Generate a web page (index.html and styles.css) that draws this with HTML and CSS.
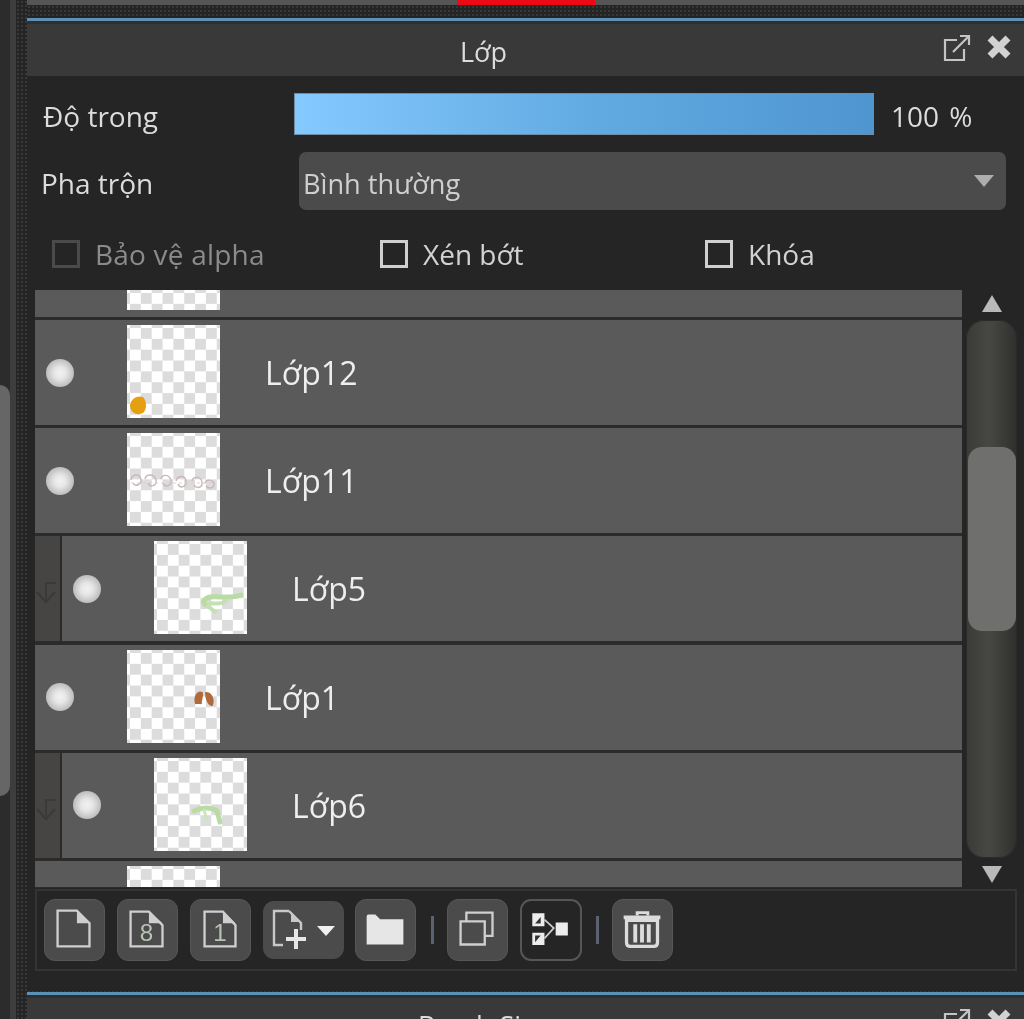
FILE: index.html
```html
<!DOCTYPE html>
<html lang="vi">
<head>
<meta charset="utf-8">
<title>Lớp</title>
<link rel="stylesheet" href="styles.css">
</head>
<body>
<div class="app">
  <aside class="rail">
    <div class="rail-track"><div class="rail-thumb"></div></div>
    <div class="rail-gap"></div>
    <div class="rail-dots"></div>
  </aside>
  <main class="main">
    <div class="top-strip"><div class="top-red"></div></div>
    <div class="dots"></div>
    <div class="blue-line"></div>

    <section class="panel">
      <header class="title-bar">
        <div class="title">Lớp</div>
        <svg class="head-icon pop" viewBox="0 0 30 30"><path d="M16 8H4V28H23V17" fill="none" stroke="#c4c4c4" stroke-width="2.200"/><path d="M12 20L27 5M19 4H28V13" fill="none" stroke="#c4c4c4" stroke-width="2.200"/></svg>
        <svg class="head-icon close" viewBox="0 0 26 26"><path d="M4 4L22 22M22 4L4 22" stroke="#d2d2d2" stroke-width="7"/></svg>
      </header>

      <div class="body">
        <div class="opacity-row">
          <span class="label">Độ trong</span>
          <div class="slider"></div>
          <span class="label value">100 %</span>
        </div>
        <div class="blend-row">
          <span class="label">Pha trộn</span>
          <div class="select"><span class="select-text">Bình thường</span><i class="select-arrow"></i></div>
        </div>
        <div class="check-row">
          <label class="check alpha disabled"><i class="box"></i>Bảo vệ alpha</label>
          <label class="check clip"><i class="box"></i>Xén bớt</label>
          <label class="check lock"><i class="box"></i>Khóa</label>
        </div>

        <div class="list-wrap">
          <div class="list">
            <div class="row cut-top"><div class="eye-slot"></div><div class="thumb stub"></div></div>

            <div class="row">
              <div class="eye-slot"><i class="eye"></i></div>
              <div class="thumb"><svg viewBox="0 0 93 93"><path d="M3 80C4 73 11 70 16 72C20 76 20 85 16 88C10 91 3 88 3 80Z" fill="#e5a012"/></svg></div>
              <span class="layer-name">Lớp12</span>
            </div>

            <div class="row">
              <div class="eye-slot"><i class="eye"></i></div>
              <div class="thumb"><svg viewBox="0 0 93 93"><path d="M4 47C5 41 12 40 14 46C15 52 8 54 6 50M18 46C19 41 27 40 29 47C30 53 23 55 21 50M34 46C35 41 42 41 44 47C45 53 38 55 36 50M49 48C50 43 58 41 59 48C60 54 53 56 51 51M65 48C66 43 74 43 75 49C76 55 69 56 67 52M78 50C79 46 86 46 87 51C87 56 81 56 79 53" fill="none" stroke="#cbb6b6" stroke-width="1.400"/><path d="M4 50H88" fill="none" stroke="#e6cccc" stroke-width="1" stroke-dasharray="3 3"/></svg></div>
              <span class="layer-name">Lớp11</span>
            </div>

            <div class="row child">
              <div class="clip-mark"><svg viewBox="0 0 27 30"><path d="M23 6H13V22" fill="none" stroke="#3a3a3a" stroke-width="2"/><path d="M4 15L13 25L22 15" fill="none" stroke="#3a3a3a" stroke-width="2.400"/></svg></div>
              <div class="eye-slot"><i class="eye"></i></div>
              <div class="thumb"><svg viewBox="0 0 93 93"><path d="M87 54C77 58 66 55 56 56C49 58 48 62 52 64" fill="none" stroke="#b9dba4" stroke-width="5" stroke-linecap="round"/><path d="M56 62C62 63 68 63 72 60M54 65L61 71" fill="none" stroke="#c5e0b4" stroke-width="4" stroke-linecap="round"/></svg></div>
              <span class="layer-name">Lớp5</span>
            </div>

            <div class="row">
              <div class="eye-slot"><i class="eye"></i></div>
              <div class="thumb"><svg viewBox="0 0 93 93"><path d="M69 54C67 46 71 41 75 43C76 47 73 50 74 54M79 43C84 43 87 49 85 55C81 54 79 48 79 43Z" fill="#b16a3c" stroke="#b16a3c" stroke-width="2" stroke-linejoin="round"/></svg></div>
              <span class="layer-name">Lớp1</span>
            </div>

            <div class="row child">
              <div class="clip-mark"><svg viewBox="0 0 27 30"><path d="M23 6H13V22" fill="none" stroke="#3a3a3a" stroke-width="2"/><path d="M4 15L13 25L22 15" fill="none" stroke="#3a3a3a" stroke-width="2.400"/></svg></div>
              <div class="eye-slot"><i class="eye"></i></div>
              <div class="thumb"><svg viewBox="0 0 93 93"><path d="M40 53C48 49 58 49 63 53L66 64" fill="none" stroke="#b9dba4" stroke-width="5" stroke-linecap="round"/><path d="M50 52L53 62" stroke="#cde4bd" stroke-width="3" stroke-linecap="round"/></svg></div>
              <span class="layer-name">Lớp6</span>
            </div>

            <div class="row cut-bottom"><div class="eye-slot"></div><div class="thumb stub"></div></div>
          </div>

          <div class="vscroll">
            <i class="arrow up"></i>
            <div class="vtrack"><div class="vthumb"></div></div>
            <i class="arrow down"></i>
          </div>
        </div>

        <div class="toolbar">
          <button class="tool"><svg viewBox="0 0 61 62"><path d="M13 11H33L46 24V48H13Z" fill="none" stroke="#cfcfcf" stroke-width="2.400"/><path d="M33 11V24H46Z" fill="#cfcfcf"/></svg></button>
          <button class="tool"><svg viewBox="0 0 61 62"><path d="M13 12H32L46 26V48H13Z" fill="none" stroke="#cfcfcf" stroke-width="2.400"/><path d="M32 12V24H46Z" fill="#cfcfcf"/><text x="29.500" y="42" class="num">8</text></svg></button>
          <button class="tool"><svg viewBox="0 0 61 62"><path d="M14 12H33L46 26V48H14Z" fill="none" stroke="#cfcfcf" stroke-width="2.400"/><path d="M33 12V24H46Z" fill="#cfcfcf"/><text x="30" y="42" class="num">1</text></svg></button>
          <button class="tool wide"><svg viewBox="0 0 81 58"><path d="M26 10H11V44H20M26 10L38 22V29" fill="none" stroke="#c8c8c8" stroke-width="2.400"/><path d="M28 11V21H37Z" fill="#c8c8c8"/><path d="M33 28V48M23 38H43" stroke="#e6e6e6" stroke-width="4"/><path d="M54 25H72L63 35Z" fill="#f0f0f0"/></svg></button>
          <button class="tool"><svg viewBox="0 0 61 62"><path d="M11 17Q11 15 13 15H20L25 20H49V46H11Z" fill="#e6e6e6"/></svg></button>
          <i class="sep"></i>
          <button class="tool"><svg viewBox="0 0 61 62"><path d="M13 22H38V46H13Z" fill="none" stroke="#cfcfcf" stroke-width="2.400"/><path d="M19 22V13H46V37H38" fill="none" stroke="#cfcfcf" stroke-width="2.400"/></svg></button>
          <button class="tool merge"><svg viewBox="0 0 62 62"><path d="M11 13H24V27H11ZM11 34H24V47H11ZM36 23H49V37H36Z" fill="#ececec"/><path d="M14 24L20 17V24ZM14 37L20 37L14 44Z" fill="#333"/><path d="M24 20L34 29L24 40" fill="none" stroke="#cfcfcf" stroke-width="1.800"/></svg></button>
          <i class="sep second"></i>
          <button class="tool"><svg viewBox="0 0 61 62"><path d="M11 18H49" stroke="#dcdcdc" stroke-width="4"/><path d="M25 16V13H36V16" fill="none" stroke="#dcdcdc" stroke-width="3"/><path d="M14 21H46V44Q46 48 42 48H18Q14 48 14 44Z" fill="none" stroke="#dcdcdc" stroke-width="3.400"/><path d="M23 25V44M30 25V44M37 25V44" stroke="#dcdcdc" stroke-width="4"/></svg></button>
        </div>
      </div>

      <div class="dots lower"></div>
      <div class="blue-line"></div>
      <header class="title-bar next">
        <div class="title">Brush Size</div>
        <svg class="head-icon pop" viewBox="0 0 30 30"><path d="M16 8H4V28H23V17" fill="none" stroke="#c4c4c4" stroke-width="2.200"/><path d="M12 20L27 5M19 4H28V13" fill="none" stroke="#c4c4c4" stroke-width="2.200"/></svg>
        <svg class="head-icon close" viewBox="0 0 26 26"><path d="M4 4L22 22M22 4L4 22" stroke="#d2d2d2" stroke-width="7"/></svg>
      </header>
    </section>
  </main>
</div>
</body>
</html>
```

FILE: styles.css
```css
* { box-sizing: border-box; }
html, body { margin: 0; height: 100%; background: #252525; overflow: hidden; }
body { font-family: "Open Sans", "Noto Sans", sans-serif; color: #dcdcdc; }

.app { display: flex; width: 1024px; height: 1019px; overflow: hidden; filter: blur(0.7px); }

/* left rail */
.rail { display: flex; flex: 0 0 27px; background: #2a2a2a; }
.rail-track { flex: 0 0 10px; background: #2c2c2c; padding-top: 385px; }
.rail-thumb { height: 411px; background: #666; border-radius: 0 12px 12px 0; }
.rail-gap { flex: 0 0 6px; background: #3d3d3d; }
.rail-dots { flex: 1; background: #242424 radial-gradient(circle, #383838 1px, transparent 1.3px) 0 0 / 4px 4px; }

.main { flex: 1; display: flex; flex-direction: column; min-width: 0; }
.top-strip { flex: 0 0 5px; background: #555; padding-left: 430px; }
.top-red { width: 138px; height: 5px; background: #ee0a14; }
.dots { flex: 0 0 13px; background: #242424 radial-gradient(circle, #383838 1px, transparent 1.3px) 0 0 / 4px 4px; }
.dots.lower { flex-basis: 2px; }
.blue-line { flex: 0 0 3px; background: #5b90b8; }

.panel { flex: 1; display: flex; flex-direction: column; min-height: 0; }

.title-bar { flex: 0 0 55px; height: 55px; display: flex; align-items: flex-start; background: #3a3939; box-shadow: inset 0 3px 0 #302f2f; }
.title { flex: 0 0 913px; height: 55px; text-align: center; font-size: 27px; line-height: 62px; }
.head-icon { display: block; margin-top: 11px; }
.pop { width: 30px; height: 30px; margin-left: 1px; }
.close { width: 26px; height: 26px; margin-left: 15px; margin-top: 13px; }

.body { flex: 0 0 914px; display: flex; flex-direction: column; background: #252525; padding-left: 8px; }

.label { font-size: 28px; line-height: 38px; padding-top: 4px; color: #dcdcdc; }

.opacity-row { display: flex; align-items: center; height: 42px; margin-top: 17px; padding-left: 8px; }
.opacity-row .label { flex: 0 0 251px; }
.slider { flex: 0 0 580px; height: 42px; background: linear-gradient(90deg, #85caff, #5fa8e0 55%, #4f96d0); box-shadow: inset 0 0 0 1px #6f8da5; }
.opacity-row .value { flex: 0 0 auto; margin-left: 17px; word-spacing: 3px; }

.blend-row { display: flex; align-items: center; height: 58px; margin-top: 17px; padding-left: 6px; }
.blend-row .label { flex: 0 0 258px; }
.select { flex: 0 0 707px; height: 58px; display: flex; align-items: center; justify-content: space-between; padding: 0 12px 0 4px; background: #4b4b4b; border-radius: 7px; font-size: 27.200px; color: #cfcfcf; }
.select-text { padding-top: 5px; }
.select-arrow { width: 0; height: 0; border-left: 10px solid transparent; border-right: 10px solid transparent; border-top: 12px solid #adadad; }

.check-row { display: flex; align-items: center; height: 28px; margin-top: 30px; }
.check { display: flex; align-items: center; font-size: 28px; color: #d2d2d2; }
.alpha { flex: 0 0 345px; padding-left: 17px; }
.clip { flex: 0 0 325px; }
.box { flex: 0 0 28px; height: 28px; margin-right: 15px; border: 3px solid #cfcfcf; }
.check.disabled { color: #8b8b8b; letter-spacing: 0.2px; }
.check.disabled .box { border-color: #4b4b4b; margin-right: 15px; }

.list-wrap { display: flex; height: 598px; margin-top: 22px; }
.list { flex: 0 0 927px; height: 598px; overflow: hidden; display: flex; flex-direction: column; background: #2b2b2b; }

.row { flex: 0 0 105px; margin-bottom: 3.200px; display: flex; align-items: center; background: #5a5a5a; }
.row.cut-top { flex-basis: 27px; align-items: flex-start; margin-bottom: 3px; }
.row.cut-bottom { flex: 0 0 26px; margin: 0; align-items: flex-end; }
.row.child { margin-left: -2px; }

.clip-mark { flex: 0 0 27px; align-self: stretch; margin-right: 2px; background: #474543; box-shadow: 2px 0 0 #2b2b2b; display: flex; align-items: center; }
.clip-mark svg { display: block; width: 27px; height: 30px; margin-top: 7px; }

.eye-slot { flex: 0 0 92px; padding-left: 11px; }
.eye { display: block; width: 28px; height: 28px; border-radius: 50%; background: radial-gradient(circle, #f2f2f2 0, #e6e6e6 30%, #bdbdbd 70%, #b4b4b4 100%); }

.thumb { flex: 0 0 93px; height: 93px; margin-bottom: 2px; background: #fff conic-gradient(#dcdcdc 25%, #fff 0 50%, #dcdcdc 0 75%, #fff 0) 3px 3px / 21.700px 21.700px; }
.thumb svg { display: block; width: 93px; height: 93px; }
.thumb.stub { height: 20px; margin-bottom: 0; }
.cut-bottom .thumb.stub { height: 21px; }
.layer-name { margin-left: 45px; font-size: 32px; color: #eee; }

.vscroll { display: flex; flex-direction: column; align-items: center; padding-left: 4px; flex: 0 0 55px; }
.arrow { flex: 0 0 auto; width: 0; height: 0; border-left: 10px solid transparent; border-right: 10px solid transparent; }
.arrow.up { margin-top: 5px; border-bottom: 17px solid #b9b9b9; }
.arrow.down { margin-top: 8px; border-top: 17px solid #b9b9b9; }
.vtrack { flex: 0 0 538px; width: 51px; margin-top: 8px; padding: 127px 1px 0 2px; border-radius: 18px; background: linear-gradient(90deg, #3a3a37, #474744 45%, #2f2f2d); box-shadow: inset 0 0 0 1px #2a2a2a; }
.vthumb { height: 184px; border-radius: 14px; background: #6f6f6d; }

.toolbar { display: flex; align-items: center; width: 982px; height: 82px; margin-top: 1px; padding-left: 7px; gap: 12px; border: 2px solid #343434; background: #252525; }
.tool { flex: 0 0 61px; height: 62px; padding: 0; background: #4b4b4b; border: 1px solid #575757; border-radius: 11px; }
.tool svg { display: block; width: 59px; height: 60px; }
.tool.wide { flex: 0 0 81px; height: 58px; border: 0; margin-right: -1px; }
.tool.wide svg { width: 81px; height: 58px; }
.tool.merge { background: #252525; border: 2px solid #565656; flex-basis: 62px; }
.tool.merge svg { width: 58px; height: 58px; }
.sep { flex: 0 0 3px; height: 28px; margin: 0 1px 0 3px; background: #5c6272; }
.sep.second { margin-left: 2px; }
.num { font-size: 25px; fill: #b7c4b2; text-anchor: middle; }
```
